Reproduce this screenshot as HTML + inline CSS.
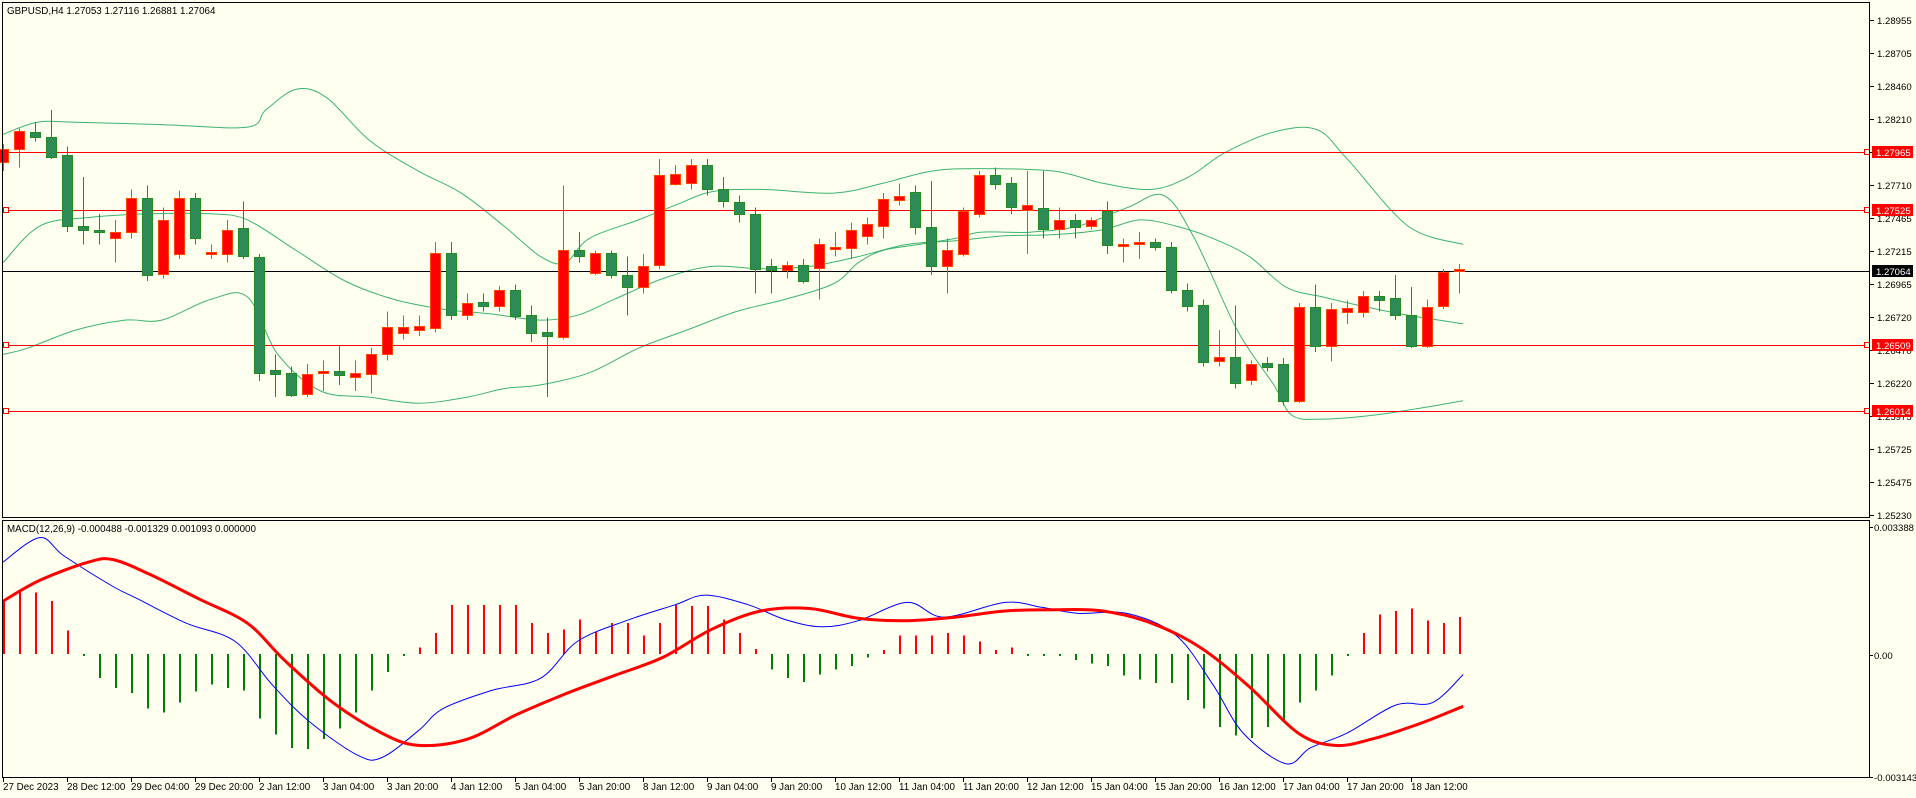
<!DOCTYPE html>
<html><head><meta charset="utf-8"><style>
html,body{margin:0;padding:0;background:#fffff0;}
svg{display:block;font-family:"Liberation Sans",sans-serif;}
</style></head><body>
<svg id="s" width="1916" height="798" xmlns="http://www.w3.org/2000/svg" shape-rendering="crispEdges">
<rect width="1916" height="798" fill="#fffff0"/>
<g id="g"></g>
<rect x="2.5" y="2.5" width="1867" height="515" fill="none" stroke="#000"/>
<rect x="2.5" y="520.5" width="1867" height="257" fill="none" stroke="#000"/>
<g id="tx" font-size="9.6" fill="#000"></g>
<text x="7" y="14" font-size="9.8">GBPUSD,H4  1.27053 1.27116 1.26881 1.27064</text>
<text x="7" y="532" font-size="9.8">MACD(12,26,9) -0.000488 -0.001329 0.001093 0.000000</text>
</svg>
<script>
const S=1.2219,NS="http://www.w3.org/2000/svg",g=document.getElementById('g'),tx=document.getElementById('tx');
function el(n,a,p){const e=document.createElementNS(NS,n);for(const k in a)e.setAttribute(k,a[k]);(p||g).appendChild(e);return e;}
const C=[[1,122,133,118,140],[1,107,122,105,137],[0,108,112,100,116],[0,112,128,90,130],[0,127,185,120,190],[0,185,188,145,200],[0,188,190,175,200],[1,190,195,180,215],[1,162,190,155,195],[0,162,225,152,230],[1,180,224,170,228],[1,162,208,156,212],[0,162,195,158,200],[1,206,208,200,212],[1,188,208,180,215],[0,187,210,165,212],[0,210,305,208,312],[0,303,306,290,325],[0,305,323,300,325],[1,306,322,298,325],[1,304,306,295,320],[0,304,307,283,315],[1,305,308,295,320],[1,290,306,285,322],[1,268,290,255,295],[1,268,273,258,278],[1,267,270,258,275],[1,207,268,198,272],[0,207,258,198,262],[1,248,258,240,262],[0,247,250,240,255],[1,237,250,234,255],[0,237,258,233,262],[0,258,273,250,280],[0,272,275,260,325],[1,205,276,152,278],[0,205,210,190,215],[1,207,223,205,225],[0,207,225,205,228],[0,225,235,210,258],[1,218,235,208,240],[1,143,217,130,220],[1,142,150,135,152],[1,135,150,130,155],[0,135,155,130,160],[0,155,165,145,170],[0,165,175,160,182],[0,175,220,170,240],[0,218,221,212,240],[1,217,221,214,228],[0,217,230,212,232],[1,200,220,195,245],[1,202,204,190,210],[1,188,203,182,212],[1,183,193,178,200],[1,163,185,158,195],[1,160,163,150,168],[0,157,186,152,192],[0,186,218,148,225],[1,205,218,195,240],[1,173,208,170,210],[1,143,175,140,178],[0,143,150,137,155],[0,150,170,145,175],[1,168,172,140,208],[0,170,187,140,195],[1,180,187,170,195],[0,180,186,175,195],[1,180,185,178,188],[0,173,201,165,208],[1,200,202,195,215],[1,198,200,190,212],[0,198,202,195,205],[0,202,237,198,240],[0,237,250,232,255],[0,250,297,245,300],[1,292,295,270,300],[0,292,313,250,318],[1,298,311,295,315],[0,297,300,292,304],[0,298,328,293,332],[1,251,328,248,330],[0,251,283,233,288],[1,253,283,248,296],[1,252,255,246,265],[1,242,255,238,260],[0,242,245,238,255],[0,244,258,225,262],[0,258,283,235,285],[1,251,283,245,285],[1,223,251,220,253],[1,220,222,216,240]];
const H=[491,483,485,492,516,535,555,563,567,580,583,575,566,560,563,565,588,601,612,613,605,596,583,565,550,535,530,518,495,495,495,495,495,510,518,515,507,517,510,510,520,510,495,496,496,507,518,531,548,555,558,552,548,545,538,532,520,520,520,518,520,525,532,530,535,535,537,540,543,545,553,556,559,559,573,580,595,602,604,595,590,575,565,553,535,518,503,500,498,508,510,505];
const up=[[0,110],[28,100],[60,100],[130,102],[200,104],[215,90],[240,73],[265,80],[300,115],[340,140],[375,158],[410,185],[440,210],[460,215],[480,195],[520,180],[550,168],[580,157],[620,155],[680,158],[720,150],[760,140],[800,138],[860,140],[900,150],[940,155],[970,145],[1000,125],[1040,108],[1075,106],[1100,130],[1150,185],[1195,200]];
const mid=[[0,215],[30,185],[70,178],[120,175],[170,175],[200,180],[240,205],[280,230],[320,245],[360,253],[400,257],[440,262],[470,258],[500,245],[540,228],[580,218],[620,220],[660,218],[700,210],[740,200],[780,197],[820,193],[860,192],[900,188],[930,180],[960,185],[990,195],[1020,210],[1050,235],[1080,243],[1110,250],[1150,258],[1195,265]];
const lo=[[0,290],[20,285],[60,270],[100,262],[130,262],[170,245],[200,243],[225,290],[260,320],[300,325],[340,330],[380,325],[410,318],[440,315],[480,305],[520,285],[560,270],[600,255],[640,245],[680,232],[700,215],[720,205],[750,200],[780,195],[800,190],[840,190],[880,185],[920,170],[950,160],[975,195],[1010,270],[1040,315],[1055,340],[1080,343],[1120,340],[1160,334],[1195,328]];
const sig=[[0,492],[30,475],[70,460],[90,458],[120,470],[160,490],[200,510],[230,540],[270,575],[310,600],[340,610],[380,605],[420,585],[460,568],[500,553],[540,538],[580,515],[620,500],[660,498],[700,506],[740,508],[780,505],[820,500],[860,499],[900,500],[940,510],[980,530],[1020,562],[1060,600],[1090,610],[1120,605],[1160,592],[1195,578]];
const mac=[[0,460],[30,440],[50,455],[90,480],[110,490],[150,510],[190,525],[220,560],[250,590],[290,618],[310,620],[340,598],[360,580],[400,565],[440,555],[470,525],[510,508],[550,495],[575,487],[610,495],[640,507],[670,513],[700,508],[740,493],[770,505],[820,493],[850,497],[880,502],[920,502],[960,520],[990,560],[1015,600],[1050,625],[1070,612],[1100,600],[1140,577],[1170,575],[1195,552]];
function pts(a){let o=[];for(let i=0;i<a.length;i++){o.push([a[i][0]*S+3,a[i][1]*S]);}
let d='M'+o[0][0].toFixed(1)+','+o[0][1].toFixed(1);
for(let i=0;i<o.length-1;i++){const p0=o[Math.max(0,i-1)],p1=o[i],p2=o[i+1],p3=o[Math.min(o.length-1,i+2)];
const c1=[p1[0]+(p2[0]-p0[0])/6,p1[1]+(p2[1]-p0[1])/6],c2=[p2[0]-(p3[0]-p1[0])/6,p2[1]-(p3[1]-p1[1])/6];
d+=' C'+c1.map(v=>v.toFixed(1))+' '+c2.map(v=>v.toFixed(1))+' '+p2.map(v=>v.toFixed(1));}
return d;}
[up,mid,lo].forEach(a=>el('path',{d:pts(a),fill:'none',stroke:'#3cb371','stroke-width':1,'shape-rendering':'auto'}));
[[152,'#f00'],[210,'#f00'],[345,'#f00'],[411,'#f00']].forEach(l=>{el('line',{x1:3,x2:1869,y1:l[0]+.5,y2:l[0]+.5,stroke:l[1]});el('rect',{x:3.5,y:l[0]-2.5,width:5,height:5,fill:'#fffff0',stroke:'#f00'});el('rect',{x:1864.5,y:l[0]-2.5,width:5,height:5,fill:'#fffff0',stroke:'#f00'});});
el('line',{x1:3,x2:1869,y1:271.5,y2:271.5,stroke:'#000'});
C.forEach((c,i)=>{const x=3+16*i,col=c[0]?'#f00':'#2e8b57',bd=c[0]?'#ff4500':'#228b22';
el('line',{x1:x+.5,x2:x+.5,y1:c[3]*S,y2:c[4]*S,stroke:bd});
const t=c[1]*S,b=c[2]*S;el('rect',{x:x-4.5,y:Math.round(t)+.5,width:10,height:Math.max(1,Math.round(b-t)),fill:col,stroke:bd});});
const z=654;
H.forEach((h,i)=>{const x=3+16*i,y=h*S;if(Math.abs(y-z)<1.5){el('rect',{x:x,y:z,width:2,height:2,fill:'#008000'});return;}
el('rect',{x:x,y:Math.min(y,z),width:2,height:Math.abs(y-z),fill:y<z?'#f00':'#008000'});});
el('path',{d:pts(mac),fill:'none',stroke:'#00f','stroke-width':1,'shape-rendering':'auto'});
el('path',{d:pts(sig),fill:'none',stroke:'#f00','stroke-width':3,'shape-rendering':'auto'});
const pl=['1.28955','1.28705','1.28460','1.28210','1.27960','1.27710','1.27465','1.27215','1.26965','1.26720','1.26470','1.26220','1.25975','1.25725','1.25475','1.25230'];
pl.forEach((p,i)=>{const y=20+33*i;el('line',{x1:1870,x2:1874,y1:y+.5,y2:y+.5,stroke:'#000'});const t=el('text',{x:1877,y:y+4},tx);t.textContent=p;});
[[152,'1.27965','#f00'],[210,'1.27525','#f00'],[271,'1.27064','#000'],[345,'1.26509','#f00'],[411,'1.26014','#f00']].forEach(l=>{el('rect',{x:1872,y:l[0]-6,width:41,height:12,fill:l[2]},tx);const t=el('text',{x:1876,y:l[0]+4,fill:'#fff'},tx);t.textContent=l[1];});
[[527,'0.003388'],[655,'0.00'],[777,'-0.003143']].forEach(l=>{el('line',{x1:1870,x2:1873,y1:l[0]+.5,y2:l[0]+.5,stroke:'#000'});const t=el('text',{x:1874,y:l[0]+4},tx);t.textContent=l[1];});
const tl=['27 Dec 2023','28 Dec 12:00','29 Dec 04:00','29 Dec 20:00','2 Jan 12:00','3 Jan 04:00','3 Jan 20:00','4 Jan 12:00','5 Jan 04:00','5 Jan 20:00','8 Jan 12:00','9 Jan 04:00','9 Jan 20:00','10 Jan 12:00','11 Jan 04:00','11 Jan 20:00','12 Jan 12:00','15 Jan 04:00','15 Jan 20:00','16 Jan 12:00','17 Jan 04:00','17 Jan 20:00','18 Jan 12:00'];
tl.forEach((s,i)=>{const x=3+64*i;el('line',{x1:x+.5,x2:x+.5,y1:778,y2:782,stroke:'#000'});const t=el('text',{x:x,y:790,'font-size':'9.8'},tx);t.textContent=s;});
</script>
</body></html>
